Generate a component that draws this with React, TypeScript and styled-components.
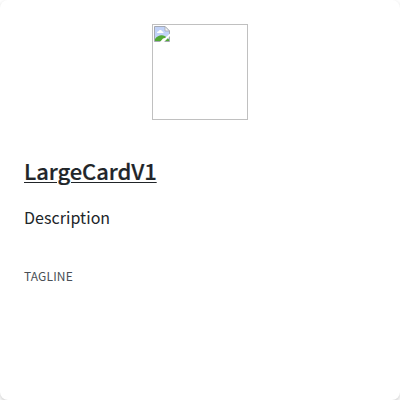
import React from "react";
import styled, { createGlobalStyle } from "styled-components";

const GlobalStyle = createGlobalStyle`
  *, *::before, *::after { box-sizing: border-box; }
  body { margin: 0; background: #fff; font-family: "Noto Sans CJK SC", sans-serif; }
`;

const Card = styled.article`
  display: flex;
  flex-direction: column;
  width: 400px;
  height: 400px;
  padding: 24px;
  border-radius: 8px;
  background: #fff;
  box-shadow: 0 2px 4px rgba(0, 0, 0, 0.2);
`;

const Thumbnail = styled.div`
  align-self: center;
  flex: none;
  width: 96px;
  height: 96px;
  padding: 1px;
  border: 1px solid #c0c0c0;
  line-height: 0;
`;

const Title = styled.h2`
  margin: 34px 0 0;
  font-size: 22px;
  font-weight: 500;
  letter-spacing: -0.08px;
  line-height: 32px;
  color: #212529;
  -webkit-text-stroke: 0.2px #212529;
  text-decoration: underline;
  text-decoration-thickness: 1px;
  text-underline-offset: 2px;
`;

const Description = styled.p`
  margin: 17px 0 0;
  font-size: 16px;
  letter-spacing: 0.05px;
  line-height: 28px;
  color: #212529;
`;

const Tagline = styled.p`
  margin: 35px 0 0;
  font-size: 12px;
  letter-spacing: 0.15px;
  line-height: 20px;
  color: #495057;
  text-transform: uppercase;
`;

const MissingImage = () => (
  <svg width="16" height="16" viewBox="0 0 16 16" aria-hidden="true">
    <path d="M.5.5h10.5l4.500 4.500v10.500H.5z" fill="#c1d2f8" stroke="#a5a9b2" />
    <path d="M3 7c0-1.200.8-1.800 1.800-1.800C5.200 3.500 7.500 3.500 8 5.200 9 5.200 9.500 6 9.500 7z" fill="#fff" />
    <path d="M1 15v-2C3 10 6 9 8 9.300c3 .3 5 2.200 7 4.200V15z" fill="#52a936" />
    <path d="M16 7.500v2.500L10 16H6l3-3.500 2-.5z" fill="#fff" />
    <path d="M11 .5V5h4.500z" fill="#f3f3f3" stroke="#a5a9b2" strokeWidth=".8" />
  </svg>
);

export default function App() {
  return (
    <>
      <GlobalStyle />
      <Card>
        <Thumbnail><MissingImage /></Thumbnail>
        <Title>LargeCardV1</Title>
        <Description>Description</Description>
        <Tagline>Tagline</Tagline>
      </Card>
    </>
  );
}
